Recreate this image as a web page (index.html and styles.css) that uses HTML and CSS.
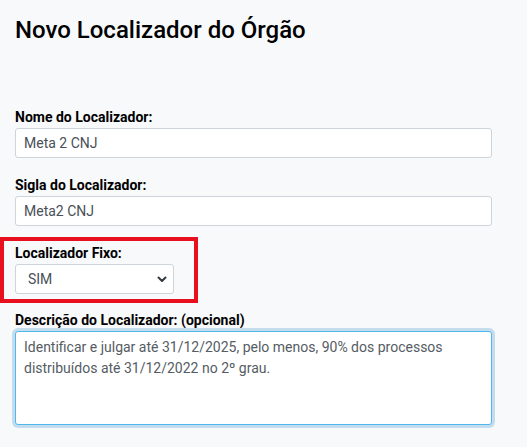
FILE: index.html
```html
<!DOCTYPE html>
<html lang="pt-BR">
<head>
<meta charset="utf-8">
<link rel="stylesheet" href="styles.css">
</head>
<body>
<div class="page">
  <h1 class="title">Novo Localizador do Órgão</h1>
  <form class="form">
    <div class="field">
      <label class="label">Nome do Localizador:</label>
      <div class="control">Meta 2 CNJ</div>
    </div>
    <div class="field">
      <label class="label">Sigla do Localizador:</label>
      <div class="control">Meta2 CNJ</div>
    </div>
    <div class="highlight">
      <label class="label">Localizador Fixo:</label>
      <div class="control select"><span>SIM</span>
        <svg class="chev" width="10" height="8" viewBox="0 0 10 8"><path d="M1.5 2.5 L5 6 L8.5 2.5" fill="none" stroke="#343a40" stroke-width="2" stroke-linecap="round" stroke-linejoin="round"/></svg>
      </div>
    </div>
    <div class="field">
      <label class="label">Descrição do Localizador: (opcional)</label>
      <div class="control textarea">Identificar e julgar até 31/12/2025, pelo menos, 90% dos processos distribuídos até 31/12/2022 no 2º grau.</div>
    </div>
  </form>
</div>
</body>
</html>
```

FILE: styles.css
```css
html, body {
  margin: 0;
  padding: 0;
  background: #f8f9fa;
}
body {
  font-family: Roboto, "Noto Sans", sans-serif;
  color: #212529;
}
.page {
  padding: 16px 15px 0 15px;
  width: 477px;
}
.title {
  margin: 0;
  font-size: 24px;
  font-weight: 500;
  line-height: 28px;
  color: #000;
}
.form {
  margin-top: 63px;
  display: flex;
  flex-direction: column;
}
.field {
  display: flex;
  flex-direction: column;
  margin-bottom: 17px;
}
.label {
  font-size: 14px;
  font-weight: 700;
  line-height: 20px;
  color: #000;
  margin-bottom: 1px;
}
.control {
  box-sizing: border-box;
  height: 30px;
  background: #fff;
  border: 1px solid #ced4da;
  border-radius: 3px;
  padding: 0 8px;
  font-size: 14px;
  line-height: 28px;
  color: #495057;
}
.highlight {
  margin-left: -15px;
  margin-top: -6px;
  margin-bottom: 7px;
  width: 190px;
  box-sizing: content-box;
  padding: 2px 20px 5px 11px;
  border: 4px solid #e8101f;
  display: flex;
  flex-direction: column;
}
.highlight .control {
  align-self: flex-start;
}
.highlight {
  width: 159px;
}
.select {
  width: 159px;
  display: flex;
  align-items: center;
  justify-content: space-between;
  padding: 0 6px 0 12px;
}
.chev {
  display: block;
}
.textarea {
  height: 94px;
  border: 1px solid #50b8ee;
  box-shadow: 0 0 0 3px #c3ddef;
  line-height: 21px;
  padding: 5px 8px;
  color: #555c63;
}
```
